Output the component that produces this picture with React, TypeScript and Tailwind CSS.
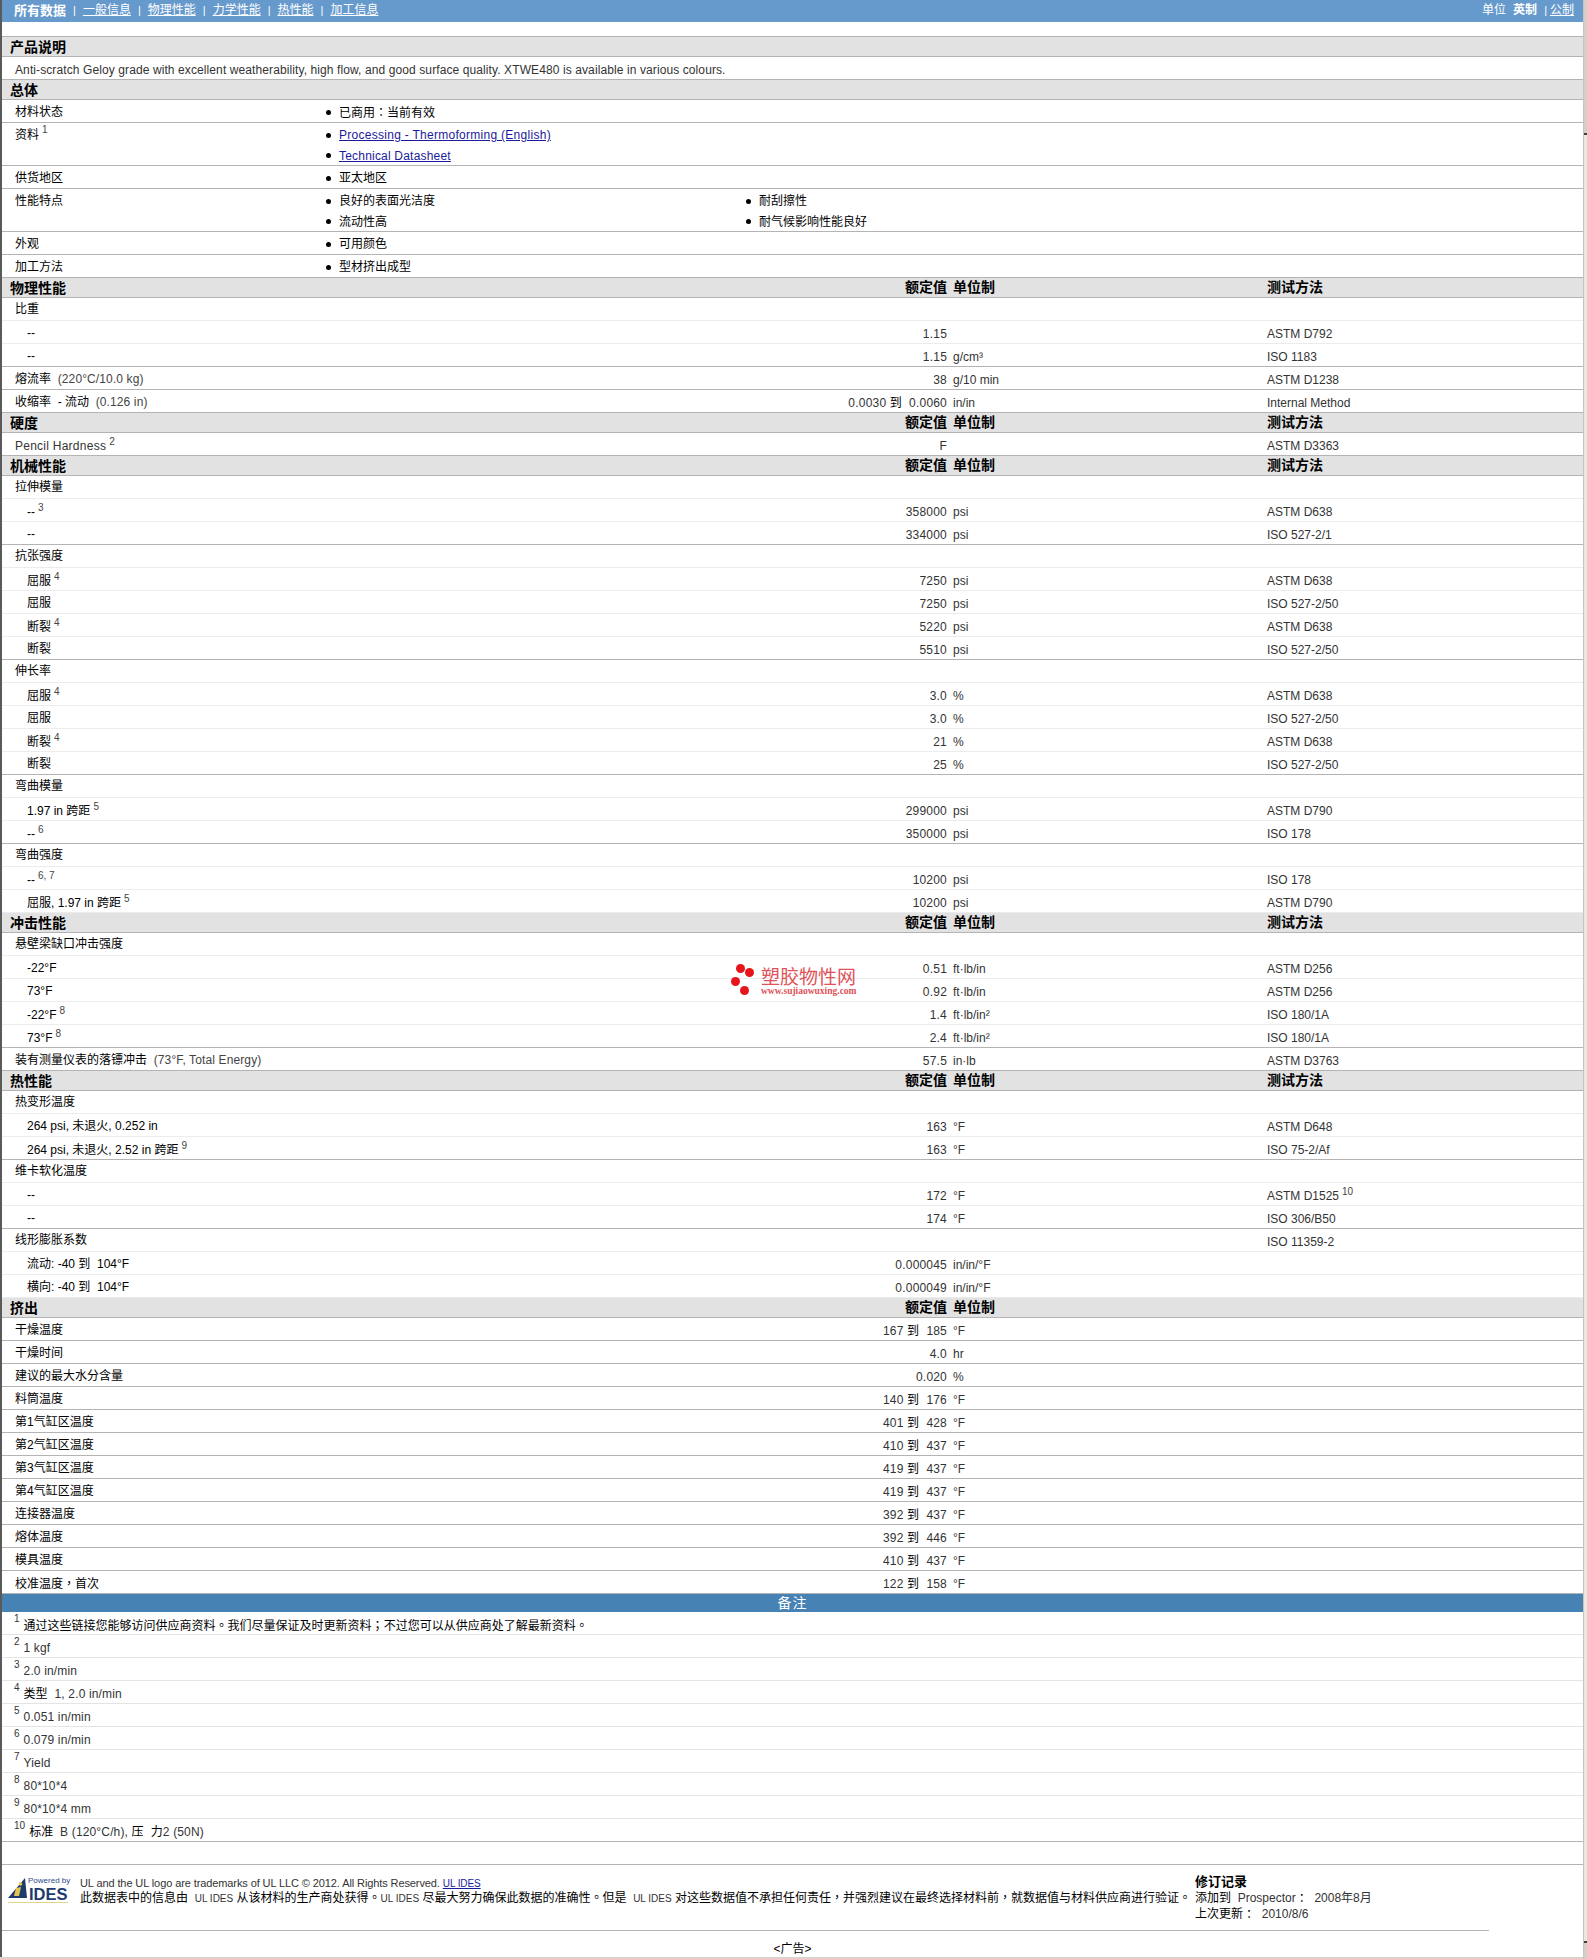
import React from 'react';

type Row =
  | { t: 'H'; name: string; cols?: 'full' | 'noMethod' | 'none' }
  | { t: 'G'; name: React.ReactNode; method?: string }
  | { t: 'S' | 'L' | 'R'; name: React.ReactNode; value: React.ReactNode; unit?: string; method?: React.ReactNode };

const Sup = ({ children }: { children: React.ReactNode }) => (
  <sup className="relative -top-[5px] ml-[3px] align-baseline text-[10px] leading-none text-[#444]">{children}</sup>
);

// name with a footnote mark: the mark pushes the line down a little in the original
const N = ({ s, children }: { s: string; children: React.ReactNode }) => (
  <span className="inline-block translate-y-[1px]">
    {children}
    <Sup>{s}</Sup>
  </span>
);

// full-width punctuation sits centered in the original
const P = ({ children }: { children: React.ReactNode }) => (
  <span className="font-['Noto_Sans_CJK_TC']">{children}</span>
);

const To = ({ a, b }: { a: string; b: string }) => (
  <>
    {a} <span className="text-black">到</span>&nbsp;&nbsp;{b}
  </>
);

const Cond = ({ children }: { children: React.ReactNode }) => (
  <span className="tracking-[0.12px] text-[#444]">{children}</span>
);

const rows: Row[] = [
  { t: 'H', name: '物理性能', cols: 'full' },
  { t: 'G', name: '比重' },
  { t: 'S', name: '--', value: '1.15', method: 'ASTM D792' },
  { t: 'L', name: '--', value: '1.15', unit: 'g/cm³', method: 'ISO 1183' },
  { t: 'R', name: <>熔流率&nbsp;&nbsp;<Cond>(220°C/10.0 kg)</Cond></>, value: '38', unit: 'g/10 min', method: 'ASTM D1238' },
  { t: 'R', name: <>收缩率&nbsp;&nbsp;- 流动&nbsp;&nbsp;<Cond>(0.126 in)</Cond></>, value: <To a="0.0030" b="0.0060" />, unit: 'in/in', method: 'Internal Method' },
  { t: 'H', name: '硬度', cols: 'full' },
  { t: 'R', name: <N s="2"><span className="tracking-[0.25px] text-[#333]">Pencil Hardness</span></N>, value: 'F', method: 'ASTM D3363' },
  { t: 'H', name: '机械性能', cols: 'full' },
  { t: 'G', name: '拉伸模量' },
  { t: 'S', name: <N s="3">--</N>, value: '358000', unit: 'psi', method: 'ASTM D638' },
  { t: 'L', name: '--', value: '334000', unit: 'psi', method: 'ISO 527-2/1' },
  { t: 'G', name: '抗张强度' },
  { t: 'S', name: <N s="4">屈服</N>, value: '7250', unit: 'psi', method: 'ASTM D638' },
  { t: 'S', name: '屈服', value: '7250', unit: 'psi', method: 'ISO 527-2/50' },
  { t: 'S', name: <N s="4">断裂</N>, value: '5220', unit: 'psi', method: 'ASTM D638' },
  { t: 'L', name: '断裂', value: '5510', unit: 'psi', method: 'ISO 527-2/50' },
  { t: 'G', name: '伸长率' },
  { t: 'S', name: <N s="4">屈服</N>, value: '3.0', unit: '%', method: 'ASTM D638' },
  { t: 'S', name: '屈服', value: '3.0', unit: '%', method: 'ISO 527-2/50' },
  { t: 'S', name: <N s="4">断裂</N>, value: '21', unit: '%', method: 'ASTM D638' },
  { t: 'L', name: '断裂', value: '25', unit: '%', method: 'ISO 527-2/50' },
  { t: 'G', name: '弯曲模量' },
  { t: 'S', name: <N s="5">1.97 in 跨距</N>, value: '299000', unit: 'psi', method: 'ASTM D790' },
  { t: 'L', name: <N s="6">--</N>, value: '350000', unit: 'psi', method: 'ISO 178' },
  { t: 'G', name: '弯曲强度' },
  { t: 'S', name: <N s="6, 7">--</N>, value: '10200', unit: 'psi', method: 'ISO 178' },
  { t: 'S', name: <N s="5">屈服, 1.97 in 跨距</N>, value: '10200', unit: 'psi', method: 'ASTM D790' },
  { t: 'H', name: '冲击性能', cols: 'full' },
  { t: 'G', name: '悬壁梁缺口冲击强度' },
  { t: 'S', name: '-22°F', value: '0.51', unit: 'ft·lb/in', method: 'ASTM D256' },
  { t: 'S', name: '73°F', value: '0.92', unit: 'ft·lb/in', method: 'ASTM D256' },
  { t: 'S', name: <N s="8">-22°F</N>, value: '1.4', unit: 'ft·lb/in²', method: 'ISO 180/1A' },
  { t: 'L', name: <N s="8">73°F</N>, value: '2.4', unit: 'ft·lb/in²', method: 'ISO 180/1A' },
  { t: 'R', name: <>装有测量仪表的落镖冲击&nbsp;&nbsp;<Cond>(73°F, Total Energy)</Cond></>, value: '57.5', unit: 'in·lb', method: 'ASTM D3763' },
  { t: 'H', name: '热性能', cols: 'full' },
  { t: 'G', name: '热变形温度' },
  { t: 'S', name: '264 psi, 未退火, 0.252 in', value: '163', unit: '°F', method: 'ASTM D648' },
  { t: 'L', name: <N s="9">264 psi, 未退火, 2.52 in 跨距</N>, value: '163', unit: '°F', method: 'ISO 75-2/Af' },
  { t: 'G', name: '维卡软化温度' },
  { t: 'S', name: '--', value: '172', unit: '°F', method: <>ASTM D1525<Sup>10</Sup></> },
  { t: 'L', name: '--', value: '174', unit: '°F', method: 'ISO 306/B50' },
  { t: 'G', name: '线形膨胀系数', method: 'ISO 11359-2' },
  { t: 'S', name: <>流动: -40 到&nbsp;&nbsp;104°F</>, value: '0.000045', unit: 'in/in/°F' },
  { t: 'S', name: <>横向: -40 到&nbsp;&nbsp;104°F</>, value: '0.000049', unit: 'in/in/°F' },
  { t: 'H', name: '挤出', cols: 'noMethod' },
  { t: 'R', name: '干燥温度', value: <To a="167" b="185" />, unit: '°F' },
  { t: 'R', name: '干燥时间', value: '4.0', unit: 'hr' },
  { t: 'R', name: '建议的最大水分含量', value: '0.020', unit: '%' },
  { t: 'R', name: '料筒温度', value: <To a="140" b="176" />, unit: '°F' },
  { t: 'R', name: '第1气缸区温度', value: <To a="401" b="428" />, unit: '°F' },
  { t: 'R', name: '第2气缸区温度', value: <To a="410" b="437" />, unit: '°F' },
  { t: 'R', name: '第3气缸区温度', value: <To a="419" b="437" />, unit: '°F' },
  { t: 'R', name: '第4气缸区温度', value: <To a="419" b="437" />, unit: '°F' },
  { t: 'R', name: '连接器温度', value: <To a="392" b="437" />, unit: '°F' },
  { t: 'R', name: '熔体温度', value: <To a="392" b="446" />, unit: '°F' },
  { t: 'R', name: '模具温度', value: <To a="410" b="437" />, unit: '°F' },
  { t: 'R', name: <>校准温度<P>，</P>首次</>, value: <To a="122" b="158" />, unit: '°F' },
];

const notes: { n: string; text: React.ReactNode }[] = [
  { n: '1', text: <span className="tracking-normal text-black">通过这些链接您能够访问供应商资料<P>。</P>我们尽量保证及时更新资料<P>；</P>不过您可以从供应商处了解最新资料<P>。</P></span> },
  { n: '2', text: '1 kgf' },
  { n: '3', text: '2.0 in/min' },
  { n: '4', text: <><span className="tracking-normal text-black">类型</span>&nbsp;&nbsp;1, 2.0 in/min</> },
  { n: '5', text: '0.051 in/min' },
  { n: '6', text: '0.079 in/min' },
  { n: '7', text: 'Yield' },
  { n: '8', text: '80*10*4' },
  { n: '9', text: '80*10*4 mm' },
  { n: '10', text: <><span className="tracking-normal text-black">标准</span>&nbsp;&nbsp;B (120°C/h), <span className="text-black">压</span>&nbsp;&nbsp;<span className="text-black">力</span>2 (50N)</> },
];

const Header = ({ name, cols }: { name: string; cols?: string }) => (
  <div className="flex h-[20px] items-center border-b border-[#b4b4b4] bg-[#e2e2e2] text-[14px] font-bold leading-none text-black">
    <div className="w-[838px] pl-[8px]">{name}</div>
    {cols !== 'none' && <div className="w-[107px] -translate-y-[1px] text-right">额定值</div>}
    {cols !== 'none' && <div className="w-[320px] -translate-y-[1px] pl-[6px]">单位制</div>}
    {cols === 'full' && <div className="-translate-y-[1px]">测试方法</div>}
  </div>
);

const DataRow = ({ row }: { row: Row }) => {
  if (row.t === 'H') return <Header name={row.name} cols={row.cols} />;
  if (row.t === 'G') {
    return (
      <div className="flex h-[23px] items-center border-b border-[#ececec] text-black">
        <div className="w-[838px] pl-[13px]">{row.name}</div>
        <div className="ml-[427px] translate-y-[2px] text-[#333]">{row.method}</div>
      </div>
    );
  }
  const border = row.t === 'S' ? 'border-[#ececec]' : 'border-[#b4b4b4]';
  const indent = row.t === 'R' ? 'pl-[13px]' : 'pl-[25px]';
  return (
    <div className={`flex h-[23px] items-center border-b ${border} text-[#333]`}>
      <div className={`w-[838px] translate-y-[1px] text-black ${indent}`}>{row.name}</div>
      <div className="w-[107px] translate-y-[2px] text-right tracking-[0.2px] whitespace-nowrap">{row.value}</div>
      <div className="w-[320px] translate-y-[2px] pl-[6px]">{row.unit}</div>
      <div className="translate-y-[2px]">{row.method}</div>
    </div>
  );
};

const InfoRow = ({ label, children, h = 'h-[23px]' }: { label: React.ReactNode; children: React.ReactNode; h?: string }) => (
  <div className={`flex border-b border-[#b4b4b4] text-black ${h}`}>
    <div className="flex h-[24px] w-[324px] items-center pl-[13px]">{label}</div>
    <div>{children}</div>
  </div>
);

const Bullet = ({ children }: { children: React.ReactNode }) => (
  <div className="flex h-[17px] items-center first:h-[24px]">
    <span className="mr-[8px] h-[5px] w-[5px] rounded-full bg-black" />
    {children}
  </div>
);

const BarSep = () => <span className="mx-[7px] text-[11px] font-normal no-underline">|</span>;

const IdesLogo = () => (
  <div className="relative h-[30px] w-[64px] shrink-0">
    <svg viewBox="0 0 19 20" className="absolute top-[2px] left-0 h-[20px] w-[19px]">
      <path d="M0 20 L17 0 L19 20 Z" fill="#1f3a6e" />
      <path d="M8 10 L13 9 L11 18 L6 18 Z" fill="#e3c44f" />
      <circle cx="12.5" cy="6" r="1.8" fill="#e3c44f" />
    </svg>
    <span className="absolute top-0 left-[20px] text-[8px] leading-[9px] whitespace-nowrap text-[#2f4a8a]">Powered by</span>
    <span className="absolute top-[10px] left-[21px] text-[16.5px] leading-[16px] font-bold text-[#1f3a6e]">IDES</span>
    <div className="absolute top-[26px] left-0 h-[1px] w-[60px] bg-[#e0d48c]" />
  </div>
);

const Ul = () => <span className="text-[10px] text-[#333]">UL IDES</span>;

export default function App() {
  return (
    <div className="relative h-[1959px] w-[1587px] overflow-hidden bg-white text-[12px] font-['Liberation_Sans','Noto_Sans_CJK_SC',sans-serif] leading-none">
      <div className="flex h-[1957px] w-[1583px] flex-col border-l-2 border-[#5a5a5a]">
        {/* Top nav */}
        <div className="flex h-[22px] shrink-0 items-center justify-between bg-[#6699cc] pr-[9px] pl-[12px] text-white">
          <div className="flex -translate-y-[1px] items-center">
            <b className="text-[13px]">所有数据</b>
            <BarSep />
            <span className="underline">一般信息</span>
            <BarSep />
            <span className="underline">物理性能</span>
            <BarSep />
            <span className="underline">力学性能</span>
            <BarSep />
            <span className="underline">热性能</span>
            <BarSep />
            <span className="underline">加工信息</span>
          </div>
          <div className="flex -translate-y-[1px] items-center">
            单位
            <b className="ml-[7px]">英制</b>
            <span className="mr-[3px] ml-[7px] text-[11px]">|</span>
            <span className="underline">公制</span>
          </div>
        </div>
        <div className="h-[15px] shrink-0 border-b border-[#b4b4b4]" />

        <Header name="产品说明" cols="none" />
        <div className="flex h-[23px] items-center border-b border-[#b4b4b4] pl-[13px] text-[#333]">
          <span className="translate-y-[2px] tracking-[0.1px]">
            Anti-scratch Geloy grade with excellent weatherability, high flow, and good surface quality. XTWE480 is available in various colours.
          </span>
        </div>
        <Header name="总体" cols="none" />
        <InfoRow label="材料状态">
          <Bullet><span>已商用<P>：</P>当前有效</span></Bullet>
        </InfoRow>
        <InfoRow label={<>资料<Sup>1</Sup></>} h="h-[43px]">
          <Bullet><span className="tracking-[0.28px] text-[#1a1a9c] underline">Processing - Thermoforming (English)</span></Bullet>
          <Bullet><span className="tracking-[0.2px] text-[#1a1a9c] underline">Technical Datasheet</span></Bullet>
        </InfoRow>
        <InfoRow label="供货地区">
          <Bullet>亚太地区</Bullet>
        </InfoRow>
        <InfoRow label="性能特点" h="h-[43px]">
          <div className="flex">
            <div className="w-[420px]">
              <Bullet>良好的表面光洁度</Bullet>
              <Bullet>流动性高</Bullet>
            </div>
            <div>
              <Bullet>耐刮擦性</Bullet>
              <Bullet>耐气候影响性能良好</Bullet>
            </div>
          </div>
        </InfoRow>
        <InfoRow label="外观">
          <Bullet>可用颜色</Bullet>
        </InfoRow>
        <InfoRow label="加工方法">
          <Bullet>型材挤出成型</Bullet>
        </InfoRow>

        {rows.map((row, i) => (
          <DataRow key={i} row={row} />
        ))}

        {/* Notes */}
        <div className="flex h-[18px] shrink-0 items-center justify-center bg-[#4682b4] text-[14px] tracking-[1px] text-white">备注</div>
        {notes.map((note, i) => (
          <div key={note.n} className={`flex h-[23px] shrink-0 items-center border-b pl-[12px] text-[#333] ${i === notes.length - 1 ? 'border-[#b4b4b4]' : 'border-[#e4e4e4]'}`}>
            <span className="relative -top-[4px] mr-[4px] text-[10px] leading-none text-[#333]">{note.n}</span>
            <span className="translate-y-[2px] tracking-[0.15px]">{note.text}</span>
          </div>
        ))}
        <div className="h-[23px] shrink-0 border-b border-[#b4b4b4]" />

        {/* Footer */}
        <div className="flex h-[66px] w-[1487px] shrink-0 border-b border-[#b4b4b4]">
          <div className="pt-[11px] pl-[6px]"><IdesLogo /></div>
          <div className="w-[1123px] pt-[11px] pl-[8px] text-[11px] text-[#333]">
            <div className="h-[14px] leading-[14px] tracking-[-0.1px]">
              UL and the UL logo are trademarks of UL LLC © 2012. All Rights Reserved. <span className="text-[10px] text-[#1a1a9c] underline">UL IDES</span>
            </div>
            <div className="h-[14px] whitespace-nowrap text-[12px] leading-[14px] text-black">
              此数据表中的信息由&nbsp;&nbsp;<Ul /> 从该材料的生产商处获得<P>。</P><Ul /> 尽最大努力确保此数据的准确性<P>。</P>但是&nbsp;&nbsp;<Ul /> 对这些数据值不承担任何责任<P>，</P>并强烈建议在最终选择材料前<P>，</P>就数据值与材料供应商进行验证<P>。</P>
            </div>
          </div>
          <div className="pt-[9px] text-black">
            <div className="h-[16px] text-[13px] leading-[16px] font-bold">修订记录</div>
            <div className="flex h-[16px] items-center">添加到&nbsp;&nbsp;<span className="text-[#333]">Prospector</span><P>：</P>&nbsp;&nbsp;<span className="text-[#333]">2008年8月</span></div>
            <div className="flex h-[16px] items-center">上次更新<P>：</P>&nbsp;&nbsp;<span className="text-[#333]">2010/8/6</span></div>
          </div>
        </div>
        <div className="flex grow items-center justify-center pt-[10px] text-black">&lt;广告&gt;</div>
      </div>
      <div className="h-[2px] w-[1583px] bg-[#d8d4cc]" />

      {/* Browser scrollbar sliver */}
      <div className="absolute top-0 right-0 flex h-[1959px] w-[4px] flex-col border-l border-[#c8c4bc] bg-[#d4d0c8]">
        <div className="h-[133px] shrink-0" />
        <div className="h-[2px] shrink-0 bg-[#404040]" />
        <div className="grow bg-[#ebe8e2]" />
        <div className="h-[2px] shrink-0 bg-[#404040]" />
        <div className="h-[16px] shrink-0" />
      </div>

      {/* Watermark */}
      <div className="absolute top-[960px] left-[730px] h-[44px] w-[130px]">
        <span className="absolute top-[4px] left-[6px] h-[9px] w-[9px] rounded-full bg-[#e8141c]" />
        <span className="absolute top-[8px] left-[15px] h-[9px] w-[9px] rounded-full bg-[#e8141c]" />
        <span className="absolute top-[17px] left-[1px] h-[9px] w-[9px] rounded-full bg-[#e8141c]" />
        <span className="absolute top-[26px] left-[10px] h-[9px] w-[9px] rounded-full bg-[#e8141c]" />
        <span className="absolute top-[7px] left-[31px] text-[19px] leading-[22px] whitespace-nowrap text-[#e0525a]">塑胶物性网</span>
        <span className="absolute top-[26px] left-[31px] font-['Liberation_Serif'] text-[9.5px] leading-[10px] font-bold whitespace-nowrap text-[#e0525a]">www.sujiaowuxing.com</span>
      </div>
    </div>
  );
}
